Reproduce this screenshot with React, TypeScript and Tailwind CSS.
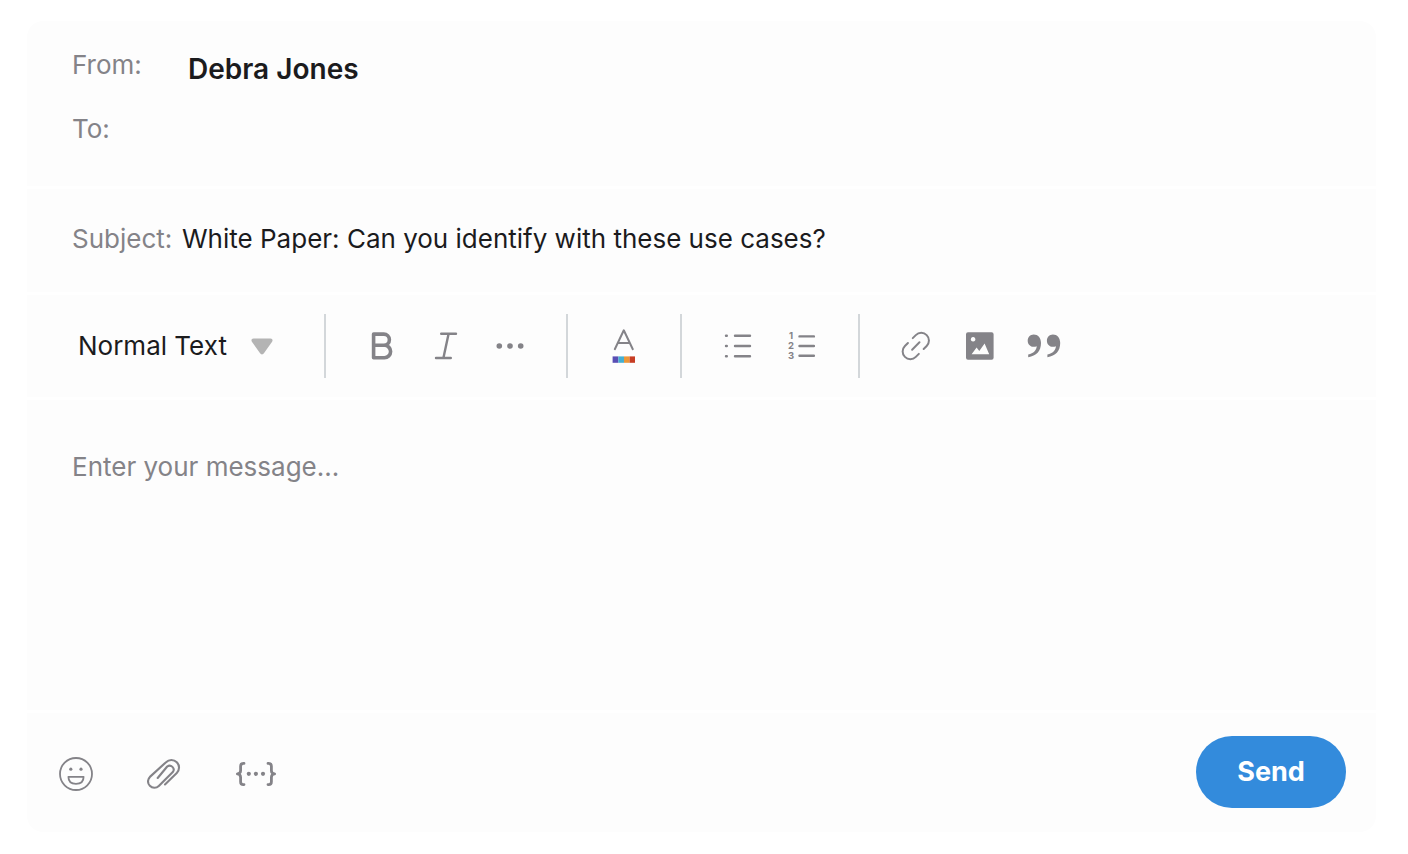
import React, { useState } from "react";

const GRAY = "#848388";

function Separator() {
  return <div className="mx-6 h-16 w-[2px] shrink-0 bg-[#d3d7da]" />;
}

function ToolButton({ label, children }: { label: string; children: React.ReactNode }) {
  return (
    <button type="button" aria-label={label} className="flex h-16 w-16 shrink-0 items-center justify-center">
      <svg width="40" height="40" viewBox="0 0 40 40" fill="none" stroke={GRAY} strokeLinecap="round" strokeLinejoin="round" aria-hidden="true">
        {children}
      </svg>
    </button>
  );
}

function FooterButton({ label, width, children }: { label: string; width: number; children: React.ReactNode }) {
  return (
    <button type="button" aria-label={label} className="shrink-0">
      <svg width={width} height="34" viewBox={`0 0 ${width} 34`} fill="none" stroke={GRAY} strokeLinecap="round" strokeLinejoin="round" aria-hidden="true">
        {children}
      </svg>
    </button>
  );
}

function Toolbar() {
  return (
    <div role="toolbar" aria-label="Formatting" className="flex items-center py-[19px] pl-[51px]">
      <div className="flex w-[222px] shrink-0 items-center gap-4">
        <select aria-label="Text style" className="w-[157px] appearance-none bg-transparent text-[26px] leading-8 text-[#1b1b1d] outline-none">
          <option>Normal Text</option>
          <option>Heading</option>
        </select>
        <svg width="22" height="17" viewBox="0 0 22 17" className="shrink-0" aria-hidden="true">
          <path d="M2.5 0.5h17c1.9 0 2.6 1.8 1.6 3.2l-8 11.4c-1.1 1.7-3.1 1.7-4.2 0L0.9 3.7C-0.1 2.3 0.6 0.5 2.5 0.5Z" fill="#b4b4b4" />
        </svg>
      </div>
      <div className="flex items-center">
        <Separator />
        <ToolButton label="Bold">
          <path d="M11.6 8.1h10.2a5.6 5.6 0 0 1 0 11.2H11.6zM11.6 19.3h10.8a6.2 6.2 0 0 1 0 12.4H11.6z" strokeWidth="3.6" />
        </ToolButton>
        <ToolButton label="Italic">
          <path d="M15.2 7.7h14.8M10 32h14.8M22.6 7.7l-5.2 24.3" strokeWidth="2.4" />
        </ToolButton>
        <ToolButton label="More formatting">
          <g fill={GRAY} stroke="none">
            <circle cx="9.3" cy="20" r="2.8" />
            <circle cx="20" cy="20" r="2.8" />
            <circle cx="30.7" cy="20" r="2.8" />
          </g>
        </ToolButton>
        <Separator />
        <ToolButton label="Text color">
          <path d="M10.8 23.2L19.8 4.3L28.8 23.2M14 16.9h11.6" strokeWidth="2" />
          <g stroke="none">
            <path d="M8.6 30.4h5.8v6.4H8.6z" fill="#594eb4" />
            <path d="M14.4 30.4H20v6.4h-5.6z" fill="#45afd1" />
            <path d="M20 30.4h5.6v6.4H20z" fill="#ec9638" />
            <path d="M25.6 30.4H31v6.4h-5.4z" fill="#c73d24" />
          </g>
        </ToolButton>
        <Separator />
        <ToolButton label="Bulleted list">
          <path d="M8 9.8h.8M8 20h.8M8 30.2h.8M17 9.8h15M17 20h15M17 30.2h15" strokeWidth="2.4" />
        </ToolButton>
        <ToolButton label="Numbered list">
          <path d="M17.5 10.4h14.4M17.5 20h14.4M17.5 29.7h14.4" strokeWidth="2.4" />
          <g fill={GRAY} stroke="none" fontSize="9.5" fontWeight="700" textAnchor="middle">
            <text x="9" y="13.2">1</text>
            <text x="9" y="23.4">2</text>
            <text x="9" y="33.4">3</text>
          </g>
        </ToolButton>
        <Separator />
        <ToolButton label="Insert link">
          <path d="M3.4-7.7H7.7a7.7 7.7 0 0 1 0 15.4H3.4M-3.4-7.7H-7.7a7.7 7.7 0 0 0 0 15.4h4.3M-5.2 0H5.2" transform="translate(19.8 20) rotate(-45)" strokeWidth="2" />
        </ToolButton>
        <ToolButton label="Insert image">
          <path fillRule="evenodd" fill={GRAY} stroke="none" d="M8 6.2h23.6a2 2 0 0 1 2 2v23.5a2 2 0 0 1-2 2H8a2 2 0 0 1-2-2V8.2a2 2 0 0 1 2-2ZM13.1 11a2.3 2.3 0 1 0 .001 0ZM11.6 28.2h17.6L24.6 17.5 19.3 25l-2.7-3.6Z" />
        </ToolButton>
        <ToolButton label="Quote">
          <g fill={GRAY} stroke="none">
            <path id="comma" d="M9.7 8.4C13.9 8.4 17 11.8 17 17c0 8-4.6 13-12.8 14.2V28.6c5.4-1.5 8.3-4.3 8.5-8.4-1 .4-1.9.6-3 .6C6.2 20.8 3.700 18.2 3.7 14.7S6.2 8.4 9.7 8.4Z" />
            <use href="#comma" x="19.2" />
          </g>
        </ToolButton>
      </div>
    </div>
  );
}

export default function App() {
  const [to, setTo] = useState("");
  const [subject, setSubject] = useState("White Paper: Can you identify with these use cases?");
  const [message, setMessage] = useState("");

  return (
    <main className="min-h-screen bg-white pt-[21px] pr-8 pb-[22px] pl-[27px] font-['Inter',sans-serif]">
      <form onSubmit={(e) => e.preventDefault()} className="divide-y-3 divide-white overflow-hidden rounded-2xl bg-[#fdfdfd]">
        <div className="flex flex-col gap-6 px-[45px] pt-6 pb-[37px]">
          <div className="flex h-10 items-start">
            <span className="w-[116px] text-[26px] leading-10 text-[#848388]">From:</span>
            <span className="pt-1 text-[28px] leading-10 font-semibold text-[#1b1b1d]">Debra Jones</span>
          </div>
          <div className="flex h-10 items-center">
            <label htmlFor="to" className="w-[116px] text-[26px] leading-10 text-[#848388]">To:</label>
            <input id="to" value={to} onChange={(e) => setTo(e.target.value)} className="min-w-0 flex-1 bg-transparent text-[26px] text-[#1b1b1d] outline-none" />
          </div>
        </div>

        <div className="flex items-center gap-2 px-[45px] pt-[30px] pb-[33px] text-[26px] leading-10">
          <label htmlFor="subject" className="w-[102px] text-[#848388]">Subject:</label>
          <input id="subject" value={subject} onChange={(e) => setSubject(e.target.value)} className="h-10 min-w-0 flex-1 bg-transparent text-[#1b1b1d] outline-none" />
        </div>

        <Toolbar />

        <div className="flex px-[45px] pt-[47px] pb-4">
          <textarea
            aria-label="Message"
            placeholder="Enter your message..."
            value={message}
            onChange={(e) => setMessage(e.target.value)}
            className="h-[247px] w-full resize-none bg-transparent text-[26px] leading-10 text-[#1b1b1d] outline-none placeholder:text-[#848388]"
          />
        </div>

        <div className="flex items-center justify-between pt-[23px] pr-[30px] pb-6 pl-8">
          <div className="flex items-center gap-[54px] pt-1">
            <FooterButton label="Insert emoji" width={34}>
              <circle cx="17" cy="17" r="16" strokeWidth="1.8" />
              <path d="M9.4 19.8h15.2c0 4.7-2.8 7.1-7.6 7.1s-7.6-2.4-7.6-7.1Z" strokeWidth="1.8" />
              <circle cx="11.8" cy="12.2" r="1.6" fill={GRAY} stroke="none" />
              <circle cx="22" cy="12.2" r="1.6" fill={GRAY} stroke="none" />
            </FooterButton>
            <FooterButton label="Attach file" width={34}>
              <path d="M18 27.4L29.8 16A7.6 7.6 0 0 0 19 5.2L2.9 19.9A6.3 6.3 0 0 0 11.8 28.9L25.8 15.1A4 4 0 0 0 20.2 9.5L10.7 21" strokeWidth="2.1" />
            </FooterButton>
            <FooterButton label="Insert variable" width={42}>
              <path d="M9 6.400H8.400c-2 0-2.800 1-2.800 2.900v4.200c0 2-1.200 3.200-3.200 3.400 2 .2 3.200 1.500 3.200 3.500v4.300c0 1.900.8 2.900 2.800 2.900h.6M33 6.400h.6c2 0 2.800 1 2.800 2.900v4.200c0 2 1.200 3.200 3.200 3.400-2 .2-3.200 1.500-3.200 3.500v4.300c0 1.900-.8 2.900-2.800 2.900H33" strokeWidth="2.8" />
              <g fill={GRAY} stroke="none">
                <circle cx="13.8" cy="16.8" r="2.1" />
                <circle cx="20.9" cy="16.8" r="2.1" />
                <circle cx="28" cy="16.8" r="2.1" />
              </g>
            </FooterButton>
          </div>
          <button type="submit" className="h-[72px] w-[150px] rounded-full bg-[#338bdc] text-[27px] font-bold text-white">
            Send
          </button>
        </div>
      </form>
    </main>
  );
}
